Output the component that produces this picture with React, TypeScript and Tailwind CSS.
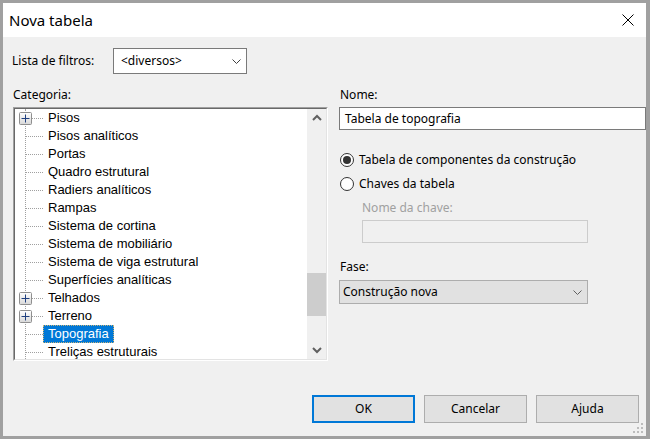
import React from "react";

type Row = { label: string; exp?: boolean; sel?: boolean };

const rows: Row[] = [
  { label: "Pisos", exp: true },
  { label: "Pisos analíticos" },
  { label: "Portas" },
  { label: "Quadro estrutural" },
  { label: "Radiers analíticos" },
  { label: "Rampas" },
  { label: "Sistema de cortina" },
  { label: "Sistema de mobiliário" },
  { label: "Sistema de viga estrutural" },
  { label: "Superfícies analíticas" },
  { label: "Telhados", exp: true },
  { label: "Terreno", exp: true },
  { label: "Topografia", sel: true },
  { label: "Treliças estruturais" },
];

function Expander() {
  return (
    <svg width="13" height="13" viewBox="0 0 13 13" className="absolute left-[4px] top-[3px]">
      <defs>
        <linearGradient id="expg" x1="0" y1="0" x2="0" y2="1">
          <stop offset="0" stopColor="#ffffff" />
          <stop offset="1" stopColor="#d8d8d8" />
        </linearGradient>
      </defs>
      <rect x="0.5" y="0.5" width="12" height="12" rx="1" fill="url(#expg)" stroke="#8f8f8f" />
      <path d="M2.5 6.5H10.5M6.5 2.5V10.5" stroke="#1f3f7f" strokeWidth="1" />
    </svg>
  );
}

function Chevron({ color = "#404040" }: { color?: string }) {
  return (
    <svg width="9" height="5" viewBox="0 0 9 5">
      <path d="M0.5 0.5L4.5 4.5L8.5 0.5" fill="none" stroke={color} strokeWidth="1" />
    </svg>
  );
}

function ScrollArrow({ up }: { up?: boolean }) {
  return (
    <svg width="10" height="7" viewBox="0 0 10 7">
      <path
        d={up ? "M1 6L5 2L9 6" : "M1 1L5 5L9 1"}
        fill="none"
        stroke="#606060"
        strokeWidth="2"
      />
    </svg>
  );
}

function Radio({ checked }: { checked?: boolean }) {
  return (
    <span className="w-[14px] h-[14px] rounded-full border border-[#333333] bg-white flex items-center justify-center shrink-0">
      {checked && <span className="w-[8px] h-[8px] rounded-full bg-[#333333]" />}
    </span>
  );
}

export default function App() {
  return (
    <div className="w-[650px] h-[439px] bg-[#a0a0a0] pt-[3px] pl-[3px] pr-[4px] pb-[3px] font-['Noto_Sans',sans-serif] text-[12px] text-black">
      <div className="relative w-full h-full bg-[#f0f0f0] flex flex-col">
        {/* Title bar */}
        <div className="h-[34px] bg-white flex items-center justify-between pl-[6px] pr-[12px] shrink-0">
          <span className="text-[15px] leading-[20px]">Nova tabela</span>
          <svg width="12" height="12" viewBox="0 0 12 12">
            <path d="M0.5 0.5L11.5 11.5M11.5 0.5L0.5 11.5" stroke="#000000" strokeWidth="1" />
          </svg>
        </div>

        {/* Filter row */}
        <div className="mt-[11px] h-[26px] flex items-center pl-[9px]">
          <span className="w-[101px] leading-[16px]">Lista de filtros:</span>
          <div className="w-[134px] h-[26px] border border-[#7a7a7a] bg-white flex items-center justify-between pl-[7px] pr-[5px]">
            <span className="leading-[16px]">&lt;diversos&gt;</span>
            <Chevron />
          </div>
        </div>

        {/* Columns */}
        <div className="mt-[13px] flex">
          {/* Left column */}
          <div className="ml-[10px] w-[315px] flex flex-col">
            <span className="h-[16px] leading-[16px]">Categoria:</span>
            <div className="mt-[4px] h-[254px] border border-t-[#a0a0a0] border-l-[#a0a0a0] border-r-white border-b-white">
              <div className="w-full h-full border border-t-[#696969] border-l-[#696969] border-r-[#e3e3e3] border-b-[#e3e3e3] bg-white flex overflow-hidden">
                <div className="relative flex-1 font-['Liberation_Sans',Arial,sans-serif] text-[13px]">
                  <div className="absolute left-[10px] top-0 bottom-0 border-l border-dotted border-[#a0a0a0]" />
                  <div className="flex flex-col">
                    {rows.map((r) => (
                      <div key={r.label} className="relative h-[18px] flex items-center pl-[28px]">
                        <span className="absolute left-[10px] top-[9px] w-[18px] border-t border-dotted border-[#a0a0a0]" />
                        {r.exp && <Expander />}
                        {r.sel ? (
                          <span className="h-[18px] leading-[16px] px-[4px] bg-[#0078d7] text-white border border-dotted border-[#c9b47a]">
                            {r.label}
                          </span>
                        ) : (
                          <span className="h-[18px] leading-[18px] px-[5px]">{r.label}</span>
                        )}
                      </div>
                    ))}
                  </div>
                </div>
                <div className="w-[19px] bg-[#f0f0f0] flex flex-col shrink-0">
                  <div className="h-[17px] flex items-center justify-center">
                    <ScrollArrow up />
                  </div>
                  <div className="flex-1 flex flex-col">
                    <div className="mt-[147px] h-[43px] bg-[#cdcdcd]" />
                  </div>
                  <div className="h-[17px] flex items-center justify-center">
                    <ScrollArrow />
                  </div>
                </div>
              </div>
            </div>
          </div>

          {/* Right column */}
          <div className="ml-[11px] w-[307px] flex flex-col">
            <span className="h-[16px] leading-[16px] pl-[1px]">Nome:</span>
            <div className="mt-[4px] w-[307px] h-[23px] border border-[#7a7a7a] bg-white flex items-center pl-[5px]">
              <span className="leading-[16px]">Tabela de topografia</span>
            </div>
            <div className="mt-[22px] h-[16px] flex items-center pl-[1px]">
              <Radio checked />
              <span className="ml-[5px] leading-[16px]">Tabela de componentes da construção</span>
            </div>
            <div className="mt-[8px] h-[16px] flex items-center pl-[1px]">
              <Radio />
              <span className="ml-[5px] leading-[16px]">Chaves da tabela</span>
            </div>
            <span className="mt-[8px] h-[16px] leading-[16px] pl-[23px] text-[#a0a0a0]">Nome da chave:</span>
            <div className="mt-[4px] ml-[23px] w-[226px] h-[23px] border border-[#cccccc] bg-[#f0f0f0]" />
            <span className="mt-[16px] h-[16px] leading-[16px] pl-[1px]">Fase:</span>
            <div className="mt-[5px] w-[249px] h-[24px] border border-[#adadad] bg-[#e1e1e1] flex items-center justify-between pl-[3px] pr-[5px]">
              <span className="leading-[16px]">Construção nova</span>
              <Chevron color="#606060" />
            </div>
          </div>
        </div>

        {/* Buttons */}
        <div className="mt-auto flex justify-end gap-[9px] pr-[7px] pb-[13px]">
          <div className="w-[103px] h-[28px] border-2 border-[#0078d7] bg-[#e1e1e1] flex items-center justify-center">
            OK
          </div>
          <div className="w-[103px] h-[28px] border border-[#adadad] bg-[#e1e1e1] flex items-center justify-center">
            Cancelar
          </div>
          <div className="w-[103px] h-[28px] border border-[#adadad] bg-[#e1e1e1] flex items-center justify-center">
            Ajuda
          </div>
        </div>

        {/* Resize grip */}
        <svg width="12" height="12" viewBox="0 0 12 12" className="absolute right-[1px] bottom-[1px]">
          <rect x="8" y="0" width="2" height="2" fill="#bcbcbc" />
          <rect x="4" y="4" width="2" height="2" fill="#bcbcbc" />
          <rect x="8" y="4" width="2" height="2" fill="#bcbcbc" />
          <rect x="0" y="8" width="2" height="2" fill="#bcbcbc" />
          <rect x="4" y="8" width="2" height="2" fill="#bcbcbc" />
          <rect x="8" y="8" width="2" height="2" fill="#bcbcbc" />
        </svg>
      </div>
    </div>
  );
}
